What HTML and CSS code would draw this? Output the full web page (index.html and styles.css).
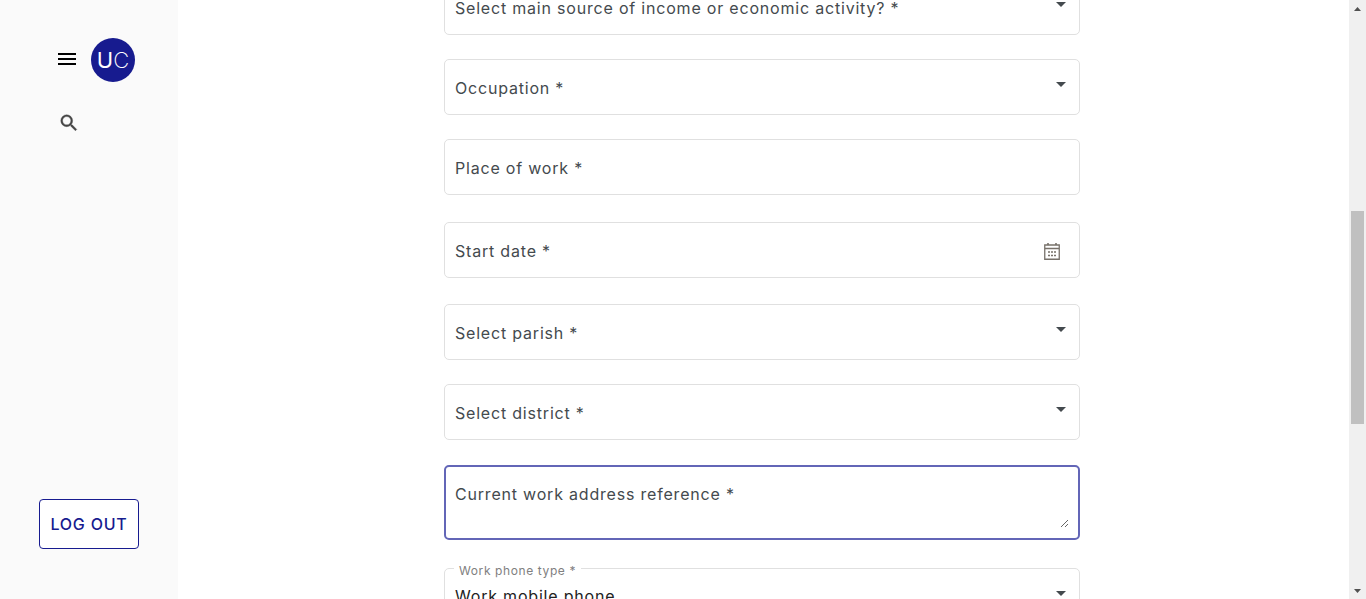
FILE: index.html
```html
<!DOCTYPE html>
<html lang="en">
<head>
<meta charset="utf-8">
<title>Work details</title>
<link rel="stylesheet" href="styles.css">
</head>
<body>
<aside class="sidebar">
  <header class="brand-row">
    <button class="icon-button menu" type="button" aria-label="Menu">
      <svg width="24" height="24" viewBox="0 0 24 24"><path fill="#000" d="M3 18h18v-2H3v2zm0-5h18v-2H3v2zm0-7v2h18V6H3z"/></svg>
    </button>
    <a class="logo" href="#"><span class="logo-u">U</span><span class="logo-c">C</span></a>
  </header>
  <button class="icon-button search" type="button" aria-label="Search">
    <svg width="22" height="22" viewBox="0 0 24 24"><path fill="#444" stroke="#444" stroke-width=".4" d="M15.5 14h-.79l-.28-.27A6.47 6.47 0 0 0 16 9.5 6.5 6.5 0 1 0 9.5 16c1.61 0 3.09-.59 4.23-1.57l.27.28v.79l5 4.99L20.490 19l-4.990-5zm-6 0a4.500 4.500 0 1 1 0-9 4.500 4.500 0 0 1 0 9z"/></svg>
  </button>
  <button class="logout" type="button">LOG OUT</button>
</aside>
<main class="content">
  <form class="form">
    <div class="field">
      <label for="income">Select main source of income or economic activity? *</label>
      <select id="income"><option></option></select>
      <span class="arrow"></span>
    </div>
    <div class="field">
      <label for="occupation">Occupation *</label>
      <select id="occupation"><option></option></select>
      <span class="arrow"></span>
    </div>
    <div class="field input-field">
      <label for="place">Place of work *</label>
      <input id="place" type="text">
    </div>
    <div class="field input-field date-field">
      <label for="start">Start date *</label>
      <input id="start" type="text">
      <button class="calendar" type="button" aria-label="Open calendar">
        <svg width="16" height="17" viewBox="0 0 16 17" fill="none" stroke="#77716a"><path d="M.75 2h14.500v14.250H.75zM.75 5.500h14.500" stroke-width="1.300"/><path d="M4 0v2M12 0v2" stroke-width="1.600"/><path d="M4 9h2M7 9h2M10 9h2M4 12.500h2M7 12.500h2M10 12.500h2" stroke-width="1.500"/></svg>
      </button>
    </div>
    <div class="field">
      <label for="parish">Select parish *</label>
      <select id="parish"><option></option></select>
      <span class="arrow"></span>
    </div>
    <div class="field">
      <label for="district">Select district *</label>
      <select id="district"><option></option></select>
      <span class="arrow"></span>
    </div>
    <div class="field area-field">
      <label for="address">Current work address reference *</label>
      <textarea id="address"></textarea>
    </div>
    <div class="field filled">
      <label for="phone">Work phone type *</label>
      <select id="phone"><option>Work mobile phone</option></select>
      <span class="arrow"></span>
    </div>
  </form>
</main>
<div class="scrollbar" aria-hidden="true">
  <span class="scroll-end"><svg width="7" height="4" viewBox="0 0 7 4"><path fill="#505050" d="M0 4 3.500 0 7 4z"/></svg></span>
  <span class="space-before"></span>
  <span class="thumb"></span>
  <span class="space-after"></span>
  <span class="scroll-end"><svg width="7" height="4" viewBox="0 0 7 4"><path fill="#505050" d="M0 0h7L3.500 4z"/></svg></span>
</div>
</body>
</html>
```
FILE: styles.css
```css
* {
  box-sizing: border-box;
}

body {
  display: flex;
  height: 100vh;
  margin: 0;
  overflow: hidden;
  background: #fff;
  color: #222;
  font: 16px/24px Inter, sans-serif;
}

button,
input,
select,
textarea {
  font: inherit;
}

button,
label,
input,
select,
textarea {
  letter-spacing: 0.05em;
}

.sidebar {
  display: flex;
  flex: 0 0 178px;
  flex-direction: column;
  align-items: flex-start;
  padding: 38px 39px 50px;
  background: #fafafa;
}

.brand-row {
  display: flex;
  align-items: center;
  gap: 12px;
  padding-left: 16px;
}

.icon-button {
  display: flex;
  padding: 0;
  border: 0;
  background: none;
}

.menu {
  padding-bottom: 2px;
}

.logo {
  display: flex;
  align-items: center;
  justify-content: center;
  width: 44px;
  height: 44px;
  border-radius: 50%;
  background: #171b8f;
  color: #fff;
  font-size: 22px;
  text-decoration: none;
}

.logo-u {
  font-weight: 400;
}

.logo-c {
  font-weight: 200;
}

.search {
  margin: 30px 0 0 19px;
}

.logout {
  width: 100px;
  height: 50px;
  margin-top: auto;
  padding: 0;
  border: 1px solid #171b8f;
  border-radius: 4px;
  background: #fff;
  color: #171b8f;
  font-weight: 500;
}

.content {
  flex: 1;
  min-width: 0;
  padding: 0 3px 0 0;
  overflow: hidden;
}

.form {
  display: flex;
  flex-direction: column;
  gap: 24px;
  max-width: 636px;
  margin: -21px auto 0;
}

.field {
  position: relative;
  display: flex;
  align-items: center;
  flex: none;
  height: 56px;
  border: 1px solid #e0e0e0;
  border-radius: 5px;
  background: #fff;
}

.field label {
  position: absolute;
  top: 16px;
  left: 10px;
  color: #444a4e;
  pointer-events: none;
}

.field select,
.field input,
.field textarea {
  flex: 1;
  min-width: 0;
  height: 100%;
  padding: 0 10px;
  border: 0;
  outline: 0;
  appearance: none;
  background: transparent;
  color: #222;
}

.arrow {
  position: absolute;
  top: 22px;
  right: 13px;
  border: 5px solid transparent;
  border-top-color: #444a4e;
  border-bottom: 0;
  pointer-events: none;
}

.date-field {
  margin: 3px 0 2px;
}

.calendar {
  display: flex;
  margin-right: 19px;
  padding: 2px 0 0;
  border: 0;
  background: none;
}

.area-field {
  height: auto;
  margin: 1px 0 4px;
  padding: 6px 9px 10px 8px;
  border: 2px solid #6366b7;
}

.area-field label {
  top: 15px;
  left: 9px;
}

.field textarea {
  height: 55px;
  padding: 8px 0;
  resize: vertical;
}

.filled label {
  top: -10px;
  left: 9px;
  padding: 0 5px;
  background: #fff;
  color: #808080;
  font-size: 12px;
}

.scrollbar {
  display: flex;
  flex: 0 0 17px;
  flex-direction: column;
  padding: 0 2px;
  background: #f0f0f0;
}

.scroll-end {
  display: flex;
  align-items: center;
  justify-content: center;
  height: 17px;
}

.space-before {
  flex: 194;
}

.thumb {
  flex: 213;
  background: #c0c0c0;
}

.space-after {
  flex: 158;
}
```
